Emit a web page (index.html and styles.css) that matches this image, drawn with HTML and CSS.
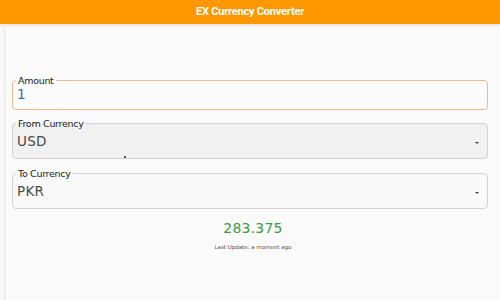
FILE: index.html
```html
<!DOCTYPE html>
<html lang="en">
<head>
    <meta charset="UTF-8">
    <meta name="viewport" content="width=device-width, initial-scale=1.0">
    <title>EX Currency Converter</title>
    <link rel="stylesheet" href="styles.css">
</head>
<body>
    <header class="app-bar">EX Currency Converter</header>

    <main class="content">
        <fieldset class="field field-active">
            <legend>Amount</legend>
            <div class="value value-input">1</div>
        </fieldset>

        <fieldset class="field field-filled">
            <legend>From Currency</legend>
            <div class="value">USD</div>
            <span class="caret"></span>
            <span class="ripple-dot"></span>
        </fieldset>

        <fieldset class="field">
            <legend>To Currency</legend>
            <div class="value">PKR</div>
            <span class="caret"></span>
        </fieldset>

        <div class="result">283.375</div>
        <div class="updated">Last Update: a moment ago</div>
    </main>
</body>
</html>
```

FILE: styles.css
```css
body {
    margin: 0;
    background-color: #fafafa;
    font-family: "DejaVu Sans", sans-serif;
    color: #333;
    width: 500px;
    height: 300px;
    overflow: hidden;
}
.app-bar {
    height: 24px;
    line-height: 24px;
    background-color: #ff9800;
    color: #fff;
    text-align: center;
    font-family: "Roboto", sans-serif;
    font-weight: bold;
    font-size: 11px;
    letter-spacing: -0.2px;
    box-shadow: 0 1px 3px rgba(0,0,0,0.15);
}
.content {
    padding: 51px 12px 0 12px;
    border-left: 3px solid #f1f1f1;
    margin-left: 3px;
    height: 225px;
}
.field {
    position: relative;
    margin: 0 0 9px -6px;
    padding: 0 6px 5px 4px;
    border: 1px solid #d3d3d3;
    border-radius: 4px;
    background-color: #f9f9f9;
    min-height: 20px;
}
.field legend {
    font-size: 9.5px;
    padding: 0 2px;
    margin-left: -1px;
    color: #222;
    letter-spacing: -0.3px;
}
.field-active {
    border-color: #e9b994;
    background-color: #fbfbfb;
    margin-bottom: 8px;
}
.field-filled {
    background-color: #f1f1f1;
}
.value {
    font-size: 13.5px;
    letter-spacing: 0.3px;
    color: #4a4a4a;
    padding-top: 4px;
    height: 20px;
}
.value-input {
    color: #3a6fb0;
    padding-top: 0;
    height: 18px;
}
.caret {
    position: absolute;
    right: 8px;
    top: 13px;
    border-left: 2px solid transparent;
    border-right: 2px solid transparent;
    border-top: 2px solid #444;
}
.ripple-dot {
    position: absolute;
    left: 111px;
    bottom: 0;
    width: 2px;
    height: 2px;
    background-color: #555;
}
.result {
    text-align: center;
    font-size: 14px;
    color: #3c9a3c;
    margin-top: 11px;
    letter-spacing: 0.2px;
}
.updated {
    text-align: center;
    font-size: 5.5px;
    color: #555;
    margin-top: 8px;
}
```
